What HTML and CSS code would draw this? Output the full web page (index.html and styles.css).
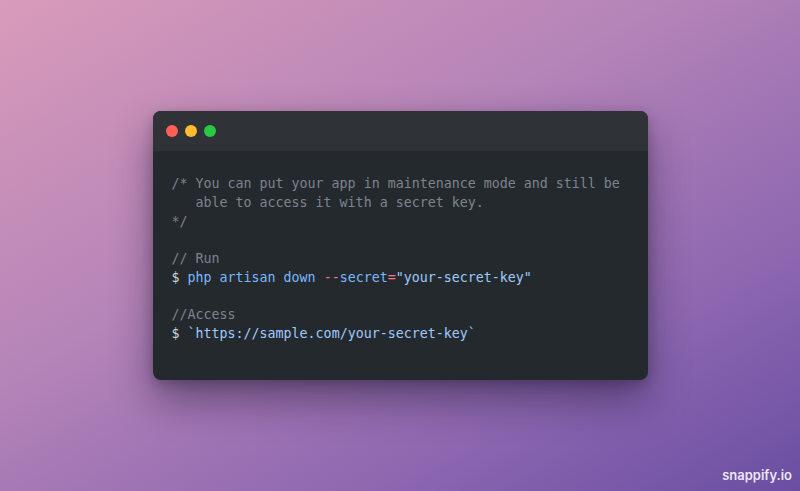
FILE: index.html
```html
<!DOCTYPE html>
<html>
<head>
<meta charset="utf-8">
<link rel="stylesheet" href="styles.css">
</head>
<body>
<div class="canvas">
  <div class="window">
    <div class="titlebar">
      <span class="dot red"></span>
      <span class="dot yellow"></span>
      <span class="dot green"></span>
    </div>
<pre class="code"><span class="c">/* You can put your app in maintenance mode and still be
   able to access it with a secret key.
*/</span>

<span class="c">// Run</span>
<span class="p">$</span> <span class="k">php artisan down</span> <span class="r">--</span><span class="k">secret</span><span class="r">=</span><span class="s">"your-secret-key"</span>

<span class="c">//Access</span>
<span class="p">$</span> <span class="s">`https://sample.com/your-secret-key`</span></pre>
  </div>
  <div class="brand">snappify.io</div>
</div>
</body>
</html>
```
FILE: styles.css
```css
html, body {
  margin: 0;
  padding: 0;
}
.canvas {
  position: relative;
  width: 800px;
  height: 491px;
  display: flex;
  align-items: center;
  justify-content: center;
  background: linear-gradient(150deg, #d99bba 0%, #b584b8 40%, #8c66b0 75%, #6a4ea2 100%);
  overflow: hidden;
}
.window {
  width: 495px;
  height: 269px;
  background: #24292e;
  border-radius: 8px;
  box-shadow: 0 20px 40px rgba(20, 16, 40, 0.45), 0 4px 12px rgba(0,0,0,0.2);
  overflow: hidden;
  display: flex;
  flex-direction: column;
}
.titlebar {
  height: 40px;
  background: #2f3338;
  display: flex;
  align-items: center;
  gap: 7px;
  padding-left: 13px;
  flex: none;
}
.dot {
  width: 12px;
  height: 12px;
  border-radius: 50%;
}
.red { background: #ff5f57; }
.yellow { background: #febc2e; }
.green { background: #28c840; }
.code {
  margin: 0;
  padding: 24px 19px 0 19px;
  font-family: "DejaVu Sans Mono", "Liberation Mono", monospace;
  font-size: 13.3px;
  line-height: 18.75px;
  color: #d1d5da;
}
.c { color: #7c848e; }
.p { color: #d1d5da; }
.k { color: #79b8ff; }
.r { color: #f97583; }
.s { color: #9ecbff; }
.brand {
  position: absolute;
  right: 8px;
  bottom: 8px;
  font-family: "Inter", "Liberation Sans", sans-serif;
  font-weight: 600;
  font-size: 13px;
  color: rgba(255, 255, 255, 0.88);
}
```
